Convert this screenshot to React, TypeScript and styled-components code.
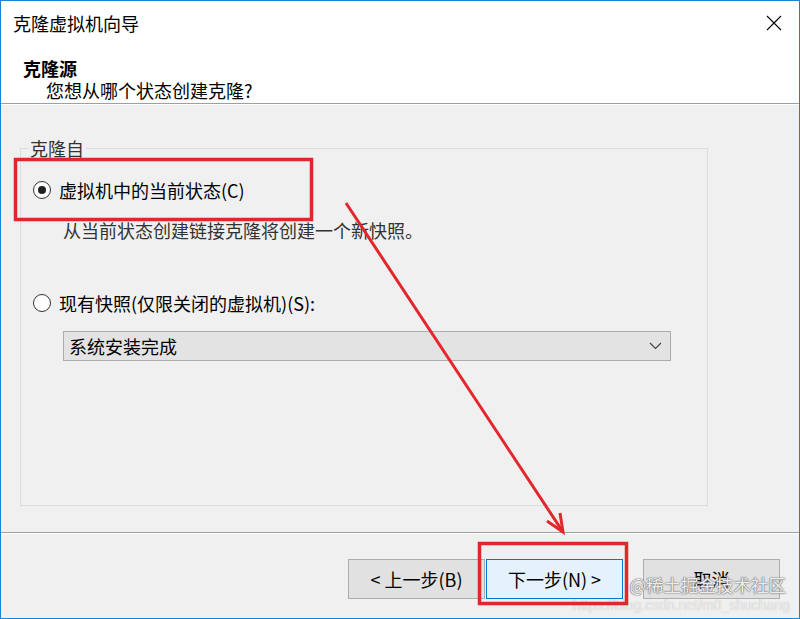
import React from "react";
import styled, { createGlobalStyle } from "styled-components";

const Global = createGlobalStyle`
  html, body { margin: 0; padding: 0; background: #fff; }
  * { box-sizing: border-box; }
  body { font-family: "Noto Sans CJK SC", "Noto Sans", sans-serif; }
`;

const Frame = styled.div`
  position: relative;
  width: 800px;
  height: 619px;
  border: 1px solid #1a83d4;
  display: flex;
  flex-direction: column;
  overflow: hidden;
  font-size: 18px;
  color: #000;
`;

const Header = styled.header`
  height: 103px;
  background: #fff;
  border-bottom: 1px solid #a0a0a0;
  display: flex;
  flex-direction: column;
`;

const TitleBar = styled.div`
  height: 44px;
  display: flex;
  align-items: center;
  justify-content: space-between;
  padding: 0 16px 0 12px;
`;

const Title = styled.span`
  font-size: 18px;
  line-height: 22px;
`;

const CloseBox = styled.div`
  width: 18px;
  height: 18px;
  display: flex;
  align-items: center;
  justify-content: center;
`;

const PageTitle = styled.div`
  margin-top: 12px;
  padding-left: 22px;
  font-weight: 700;
  line-height: 22px;
  font-size: 18px;
`;

const PageSub = styled.div`
  padding-left: 45px;
  line-height: 22px;
`;

const Body = styled.main`
  height: 429px;
  background: #f0f0f0;
  border-top: 1px solid #fff;
  border-bottom: 1px solid #a0a0a0;
  padding: 32px 91px 0 19px;
`;

const Group = styled.fieldset`
  margin: 0;
  height: 369px;
  border: 1px solid #dcdcdc;
  padding: 0 0 0 12px;
`;

const Legend = styled.legend`
  margin-left: -5px;
  padding: 0 2px;
  line-height: 22px;
  color: #333;
`;

const RadioRow = styled.label<{ $top: number }>`
  display: flex;
  align-items: center;
  gap: 8px;
  margin-top: ${(p) => p.$top}px;
  line-height: 22px;
  height: 22px;
`;

const RadioCircle = styled.span<{ $checked?: boolean }>`
  width: 18px;
  height: 18px;
  border-radius: 50%;
  border: 1px solid #333;
  background: #fff;
  display: flex;
  align-items: center;
  justify-content: center;
  &::after {
    content: "";
    width: 8px;
    height: 8px;
    border-radius: 50%;
    background: ${(p) => (p.$checked ? "#222" : "transparent")};
  }
`;

const Desc = styled.div`
  margin-top: 18px;
  padding-left: 30px;
  line-height: 22px;
  color: #333;
`;

const Select = styled.div`
  margin: 17px 0 0 30px;
  width: 608px;
  height: 30px;
  background: #e3e3e3;
  border: 1px solid #adadad;
  display: flex;
  align-items: center;
  justify-content: space-between;
  padding: 0 8px 0 5px;
  line-height: 22px;
`;

const Footer = styled.footer`
  flex: 1;
  background: #f0f0f0;
  border-top: 1px solid #fff;
  display: flex;
  justify-content: flex-end;
  align-items: flex-start;
  padding: 25px 19px 0 0;
`;

const Button = styled.button<{ $primary?: boolean; $gap?: number }>`
  width: 137px;
  height: 40px;
  margin-left: ${(p) => p.$gap ?? 0}px;
  font-family: inherit;
  font-size: 18px;
  color: #000;
  background: ${(p) => (p.$primary ? "#e5f1fb" : "#e1e1e1")};
  border: 1px solid ${(p) => (p.$primary ? "#0078d7" : "#adadad")};
  padding: 0;
  line-height: 22px;
`;

const Annot = styled.svg`
  position: absolute;
  left: -1px;
  top: -1px;
  pointer-events: none;
`;

const Watermark = styled.div`
  position: absolute;
  right: 13px;
  bottom: 4px;
  display: flex;
  flex-direction: column;
  align-items: flex-end;
  pointer-events: none;
`;

const WmMain = styled.span`
  font-size: 17.5px;
  line-height: 22px;
  color: rgba(255, 255, 255, 0.9);
  text-shadow: 0 0 1px #666, 0 0 1px #777, 0 0 2px #999;
`;

const WmUrl = styled.span`
  font-family: "Liberation Sans", sans-serif;
  font-size: 14px;
  line-height: 18px;
  margin-right: -4px;
  color: rgba(255, 255, 255, 0.75);
  text-shadow: 0 0 1px #aaa;
`;

export default function App() {
  return (
    <>
      <Global />
      <Frame>
        <Header>
          <TitleBar>
            <Title>克隆虚拟机向导</Title>
            <CloseBox>
              <svg width="16" height="16" viewBox="0 0 16 16">
                <path d="M1 1 L15 15 M15 1 L1 15" stroke="#000" strokeWidth="1.1" />
              </svg>
            </CloseBox>
          </TitleBar>
          <PageTitle>克隆源</PageTitle>
          <PageSub>您想从哪个状态创建克隆?</PageSub>
        </Header>
        <Body>
          <Group>
            <Legend>克隆自</Legend>
            <RadioRow $top={20}>
              <RadioCircle $checked />
              <span>虚拟机中的当前状态(C)</span>
            </RadioRow>
            <Desc>从当前状态创建链接克隆将创建一个新快照。</Desc>
            <RadioRow $top={51}>
              <RadioCircle />
              <span>现有快照(仅限关闭的虚拟机)(S):</span>
            </RadioRow>
            <Select>
              <span>系统安装完成</span>
              <svg width="13" height="8" viewBox="0 0 13 8">
                <path d="M1 1 L6.5 6.5 L12 1" fill="none" stroke="#444" strokeWidth="1.2" />
              </svg>
            </Select>
          </Group>
        </Body>
        <Footer>
          <Button>&lt; 上一步(B)</Button>
          <Button $primary $gap={1}>下一步(N) &gt;</Button>
          <Button $gap={20}>取消</Button>
        </Footer>
        <Watermark>
          <WmMain>@稀土掘金技术社区</WmMain>
          <WmUrl>https://blog.csdn.net/m0_shuchang</WmUrl>
        </Watermark>
        <Annot width="800" height="619" viewBox="0 0 800 619">
          <rect x="15.5" y="159.5" width="296" height="60" fill="none" stroke="#e3262b" strokeWidth="3.5" />
          <rect x="479.5" y="543.5" width="147" height="60" fill="none" stroke="#e3262b" strokeWidth="3.5" />
          <path d="M346 203 L563 532" stroke="#e3262b" strokeWidth="3" fill="none" />
          <path d="M547 521 L563 532 L560 513" stroke="#e3262b" strokeWidth="3" fill="none" strokeLinejoin="miter" />
        </Annot>
      </Frame>
    </>
  );
}
